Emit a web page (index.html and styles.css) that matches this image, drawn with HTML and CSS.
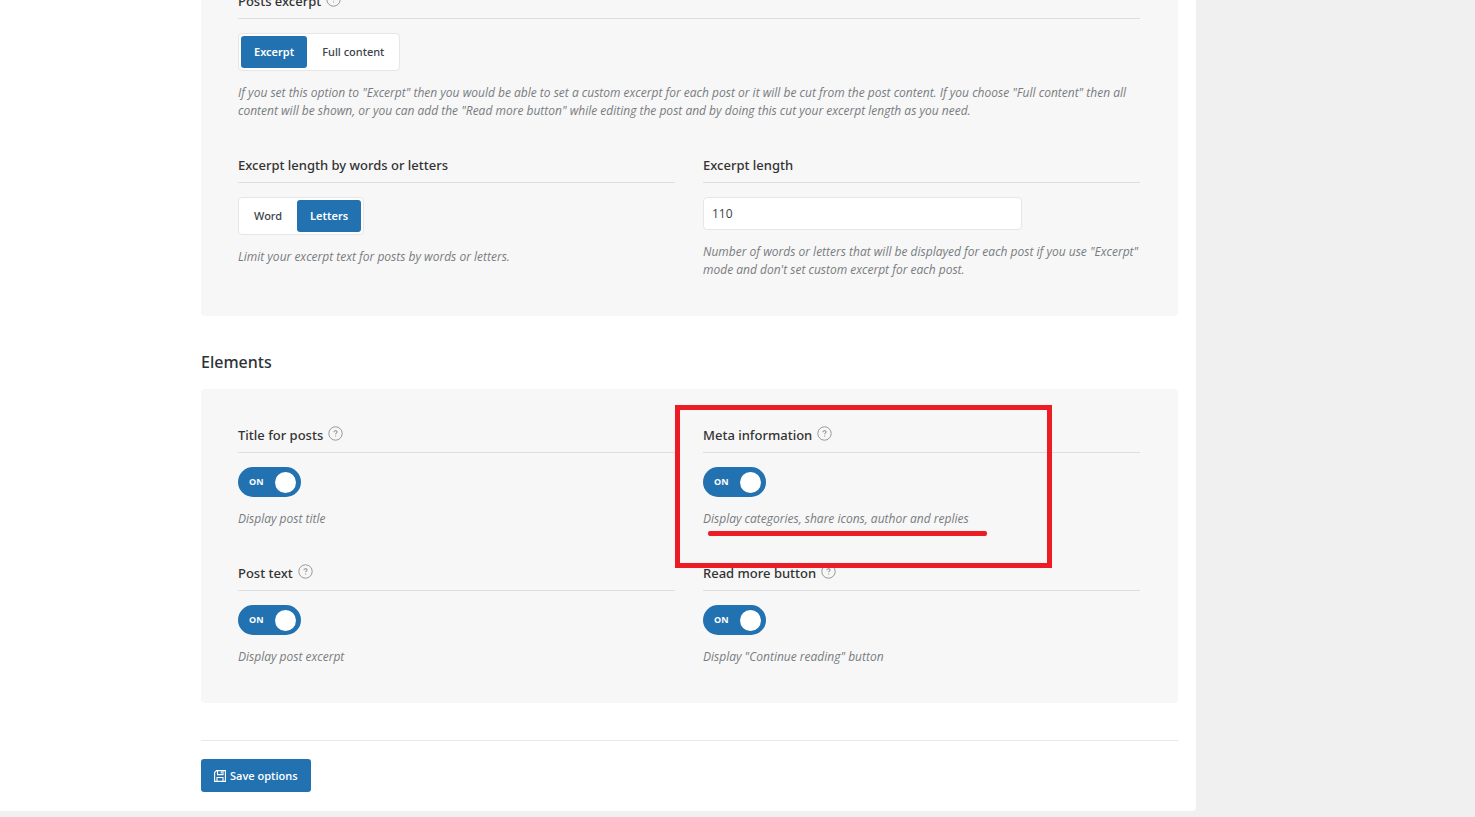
FILE: index.html
```
<!DOCTYPE html>
<html lang="en">
<head>
<meta charset="utf-8">
<title>Theme options</title>
<link rel="stylesheet" href="styles.css">
</head>
<body>
<svg class="sprite" aria-hidden="true">
  <symbol id="help" viewBox="0 0 15 15">
    <circle cx="7.5" cy="7.5" r="6.7" fill="none" stroke="currentColor" stroke-width="1"/>
    <path d="M5.9 6.2c0-2 3.2-2 3.2-.2 0 1.100-1.500 1.200-1.500 2.300M7.600 9.400v1.200" fill="none" stroke="currentColor" stroke-width="1.100"/>
  </symbol>
</svg>
<form class="options">
  <section class="panel panel-scrolled">
    <div class="field field-wide" role="radiogroup" aria-labelledby="excerpt-title">
      <div class="field-title" id="excerpt-title">Posts excerpt <svg class="help-icon"><use href="#help"/></svg></div>
      <div class="segmented">
        <label><input type="radio" name="excerpt" checked><span>Excerpt</span></label>
        <label><input type="radio" name="excerpt"><span>Full content</span></label>
      </div>
      <p class="hint">If you set this option to "Excerpt" then you would be able to set a custom excerpt for each post or it will be cut from the post content. If you choose "Full content" then all content will be shown, or you can add the "Read more button" while editing the post and by doing this cut your excerpt length as you need.</p>
    </div>
    <div class="field" role="radiogroup" aria-labelledby="unit-title">
      <div class="field-title" id="unit-title">Excerpt length by words or letters</div>
      <div class="segmented">
        <label><input type="radio" name="unit"><span>Word</span></label>
        <label><input type="radio" name="unit" checked><span>Letters</span></label>
      </div>
      <p class="hint">Limit your excerpt text for posts by words or letters.</p>
    </div>
    <div class="field">
      <label class="field-title" for="length">Excerpt length</label>
      <input class="text-input" id="length" type="text" value="110">
      <p class="hint">Number of words or letters that will be displayed for each post if you use "Excerpt" mode and don't set custom excerpt for each post.</p>
    </div>
  </section>

  <h2 class="section-title">Elements</h2>

  <section class="panel">
    <div class="field">
      <label class="field-title" for="title">Title for posts <svg class="help-icon"><use href="#help"/></svg></label>
      <label class="toggle"><input id="title" type="checkbox" checked><span class="toggle-text">ON</span><span class="knob"></span></label>
      <p class="hint">Display post title</p>
    </div>
    <div class="field marked">
      <label class="field-title" for="meta">Meta information <svg class="help-icon"><use href="#help"/></svg></label>
      <label class="toggle"><input id="meta" type="checkbox" checked><span class="toggle-text">ON</span><span class="knob"></span></label>
      <p class="hint">Display categories, share icons, author and replies</p>
      <span class="mark-box"></span>
      <span class="mark-line"></span>
    </div>
    <div class="field">
      <label class="field-title" for="text">Post text <svg class="help-icon"><use href="#help"/></svg></label>
      <label class="toggle"><input id="text" type="checkbox" checked><span class="toggle-text">ON</span><span class="knob"></span></label>
      <p class="hint">Display post excerpt</p>
    </div>
    <div class="field">
      <label class="field-title" for="more">Read more button <svg class="help-icon"><use href="#help"/></svg></label>
      <label class="toggle"><input id="more" type="checkbox" checked><span class="toggle-text">ON</span><span class="knob"></span></label>
      <p class="hint">Display "Continue reading" button</p>
    </div>
  </section>

  <footer class="actions">
    <button class="save" type="button">
      <svg class="save-icon" viewBox="0 0 12 12"><path d="M2.500.6h8.900v10.800H.6V2.500zM3.500.6v4h5.500v-4M7.300 1.500v2M3 11.400V7.500h6v3.900" fill="none" stroke="currentColor" stroke-width="1.100"/></svg>
      Save options
    </button>
  </footer>
</form>
</body>
</html>
```
FILE: styles.css
```
* {
  box-sizing: border-box;
}

body {
  margin: 0;
  min-height: 100vh;
  overflow: hidden;
  background: #f0f0f0;
  color: #3c434a;
  font: 12px/18px "Open Sans", "Noto Sans", sans-serif;
}

.sprite {
  position: absolute;
  width: 0;
  height: 0;
}

.options {
  margin: 0 279px 0 0;
  padding: 0 18px 19px 201px;
  background: #fff;
  border-radius: 0 0 4px 0;
}

.panel {
  display: grid;
  grid-template-columns: 1fr 1fr;
  gap: 36px 28px;
  padding: 37px 38px 37px 37px;
  background: #f7f7f7;
  border-radius: 4px;
}

/* First row starts just above the visible area. */
.panel-scrolled {
  margin-top: -8px;
  padding-top: 0;
}

.field {
  display: flex;
  flex-direction: column;
  align-items: flex-start;
  min-width: 0;
}

.field-wide {
  grid-column: 1 / -1;
}

.field-title {
  display: flex;
  gap: 5px;
  width: 100%;
  margin-bottom: 14px;
  padding-bottom: 8px;
  border-bottom: 1px solid #dedede;
  color: #333;
  font-family: "Noto Sans", "Open Sans", sans-serif;
  font-size: 13px;
  font-weight: 500;
}

.help-icon {
  width: 15px;
  height: 15px;
  color: #999;
}

.segmented {
  display: flex;
  gap: 2px;
  padding: 2px;
  background: #fff;
  border: 1px solid #e6e6e6;
  border-radius: 4px;
}

.segmented input,
.toggle input {
  position: absolute;
  margin: 0;
  opacity: 0;
}

.segmented label,
.toggle {
  position: relative;
}

.segmented span {
  display: block;
  padding: 0 13px;
  border-radius: 3px;
  font-family: "Noto Sans", "Open Sans", sans-serif;
  font-size: 11px;
  font-weight: 500;
  line-height: 32px;
}

.segmented input:checked + span {
  background: #2271b1;
  color: #fff;
  font-weight: 600;
}

.hint {
  margin: 13px 0 0;
  color: #777c80;
  font-style: italic;
}

.text-input {
  width: 319px;
  max-width: 100%;
  height: 33px;
  padding: 0 8px;
  background: #fff;
  border: 1px solid #e6e6e6;
  border-radius: 4px;
  color: #3c434a;
  font: inherit;
}

.section-title {
  margin: 34px 0 15px;
  color: #2c3338;
  font-family: "Noto Sans", "Open Sans", sans-serif;
  font-size: 16px;
  font-weight: 500;
  line-height: 24px;
}

.toggle {
  display: flex;
  align-items: center;
  justify-content: space-between;
  width: 63px;
  height: 30px;
  padding: 0 5px 0 11px;
  background: #2271b1;
  border-radius: 15px;
  color: #fff;
}

.toggle-text {
  font-size: 9px;
  font-weight: 700;
}

.knob {
  width: 21px;
  height: 21px;
  background: #fff;
  border-radius: 50%;
}

.marked {
  position: relative;
}

.mark-box {
  position: absolute;
  top: -21px;
  left: -28px;
  width: 377px;
  height: 163px;
  border: 5px solid #ed1c24;
}

.mark-line {
  position: absolute;
  top: 105px;
  left: 5px;
  width: 279px;
  height: 5px;
  background: #ed1c24;
  border-radius: 2px;
}

.actions {
  margin-top: 37px;
  padding-top: 18px;
  border-top: 1px solid #e8e8e8;
}

.save {
  display: flex;
  align-items: center;
  gap: 4px;
  height: 33px;
  padding: 0 13px;
  background: #2271b1;
  border: 0;
  border-radius: 3px;
  color: #fff;
  font: 600 11px/18px "Open Sans", "Noto Sans", sans-serif;
}

.save-icon {
  width: 12px;
  height: 12px;
}
```
